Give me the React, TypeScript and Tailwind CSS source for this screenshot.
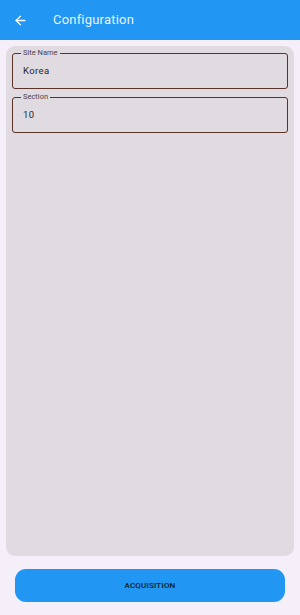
import { ArrowLeft } from 'lucide-react'

function OutlinedField({ label, value }: { label: string; value: string }) {
  return (
    <div className="relative h-[36px] rounded-[3px] border-[1.5px] border-[#5b3128] flex items-center px-[10px]">
      <span className="absolute -top-[5px] left-[8px] px-[2px] bg-[#dfdbe0] text-[7.5px] leading-[8px] text-[#4a4450]">
        {label}
      </span>
      <span className="text-[9.5px] font-normal text-[#2a2730] tracking-[0.4px]">{value}</span>
    </div>
  )
}

export default function App() {
  return (
    <div
      className="w-[300px] h-[615px] flex flex-col bg-[#f4eff8]"
      style={{ fontFamily: 'Roboto, "Noto Sans", sans-serif' }}
    >
      {/* App bar */}
      <div className="h-[40px] bg-[#2196f3] flex items-center shrink-0">
        <ArrowLeft className="ml-[13px] w-[15px] h-[15px] text-white" strokeWidth={2.2} />
        <span className="ml-[25px] text-[13px] text-[#e6f3ff] tracking-[0.2px]">Configuration</span>
      </div>

      {/* Content card */}
      <div className="flex-1 px-[6px] pt-[6px] pb-[4px] flex flex-col">
        <div className="flex-1 bg-[#dfdbe0] rounded-[9px] px-[6px] pt-[7px] flex flex-col gap-[8px]">
          <OutlinedField label="Site Name" value="Korea" />
          <OutlinedField label="Section" value="10" />
        </div>
      </div>

      {/* Bottom action */}
      <div className="h-[55px] shrink-0 px-[15px] pt-[9px]">
        <button
          type="button"
          className="w-full h-[33px] rounded-[11px] bg-[#2196f3] text-[8px] font-medium text-[#0b1a2a] tracking-[0.2px]"
        >
          ACQUISITION
        </button>
      </div>
    </div>
  )
}
